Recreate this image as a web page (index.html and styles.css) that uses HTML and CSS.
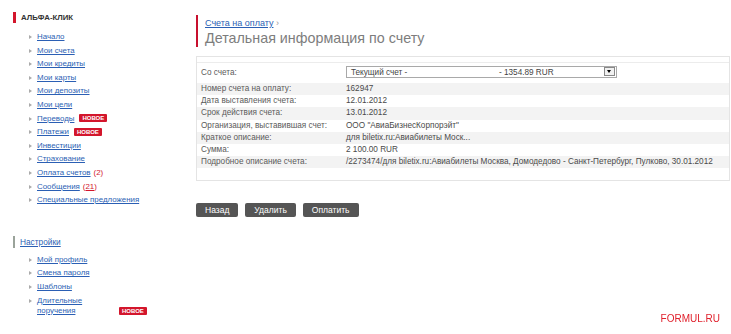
FILE: index.html
```html
<!DOCTYPE html>
<html lang="ru">
<head>
    <meta charset="UTF-8">
    <title>Альфа-Клик — Детальная информация по счету</title>
    <link rel="stylesheet" href="styles.css">
</head>
<body>

<div class="page">
    <div class="sidebar">
        <div class="side-title">АЛЬФА-КЛИК</div>
        <ul class="menu">
            <li><a href="#">Начало</a></li>
            <li><a href="#">Мои счета</a></li>
            <li><a href="#">Мои кредиты</a></li>
            <li><a href="#">Мои карты</a></li>
            <li><a href="#">Мои депозиты</a></li>
            <li><a href="#">Мои цели</a></li>
            <li><a href="#">Переводы</a><span class="badge">новое</span></li>
            <li><a href="#">Платежи</a><span class="badge">новое</span></li>
            <li><a href="#">Инвестиции</a></li>
            <li><a href="#">Страхование</a></li>
            <li><a href="#">Оплата счетов</a> <span class="count">(2)</span></li>
            <li><a href="#">Сообщения</a> <span class="count">(<u>21</u>)</span></li>
            <li><a href="#">Специальные предложения</a></li>
        </ul>

        <div class="side-sub"><a href="#">Настройки</a></div>
        <ul class="menu">
            <li><a href="#">Мой профиль</a></li>
            <li><a href="#">Смена пароля</a></li>
            <li><a href="#">Шаблоны</a></li>
            <li class="wide"><a href="#" class="narrow">Длительные поручения</a><span class="badge">новое</span></li>
        </ul>
    </div>

    <div class="content">
        <div class="head">
            <div class="crumbs"><a href="#">Счета на оплату</a> <span class="arr">›</span></div>
            <h1>Детальная информация по счету</h1>
        </div>

        <div class="panel">
            <div class="panel-top"></div>
            <div class="row-select">
                <div class="label">Со счета:</div>
                <div class="select">
                    <span class="sel-name">Текущий счет -</span>
                    <span class="sel-sum">- 1354.89 RUR</span>
                    <span class="sel-btn"></span>
                </div>
            </div>
            <div class="rows">
                <div class="row"><div class="label">Номер счета на оплату:</div><div class="value">162947</div></div>
                <div class="row"><div class="label">Дата выставления счета:</div><div class="value">12.01.2012</div></div>
                <div class="row"><div class="label">Срок действия счета:</div><div class="value">13.01.2012</div></div>
                <div class="row"><div class="label">Организация, выставившая счет:</div><div class="value">ООО "АвиаБизнесКорпорэйт"</div></div>
                <div class="row"><div class="label">Краткое описание:</div><div class="value">для biletix.ru:Авиабилеты Моск...</div></div>
                <div class="row"><div class="label">Сумма:</div><div class="value">2 100.00 RUR</div></div>
                <div class="row"><div class="label">Подробное описание счета:</div><div class="value">/2273474/для biletix.ru:Авиабилеты Москва, Домодедово - Санкт-Петербург, Пулково, 30.01.2012</div></div>
            </div>
        </div>

        <div class="buttons">
            <button>Назад</button>
            <button>Удалить</button>
            <button>Оплатить</button>
        </div>
    </div>
</div>

<div class="watermark">FORMUL.RU</div>

</body>
</html>
```

FILE: styles.css
```css
body {
    margin: 0;
    font-family: 'Liberation Sans', Arial, sans-serif;
    font-size: 8.2px;
    color: #5a5a5a;
    background: #fff;
}
a {
    color: #2b5fb4;
}
.page {
    display: flex;
}
.sidebar {
    width: 190px;
    flex-shrink: 0;
    padding: 12px 0 0 13px;
    box-sizing: border-box;
}
.side-title {
    border-left: 3px solid #d3162c;
    padding-left: 5px;
    font-weight: bold;
    font-size: 7.8px;
    line-height: 11px;
    color: #333;
}
.menu {
    list-style: none;
    margin: 7px 0 0 0;
    padding: 0 0 0 16px;
    font-size: 7.9px;
}
.menu li {
    line-height: 13.6px;
    padding-left: 8px;
    position: relative;
    display: flex;
    align-items: center;
}
.menu li:before {
    content: "";
    position: absolute;
    left: 0;
    top: 5px;
    border-left: 3px solid #aaa;
    border-top: 2px solid transparent;
    border-bottom: 2px solid transparent;
}
.badge {
    background: #d3162c;
    color: #fff;
    font-weight: bold;
    font-size: 6px;
    text-transform: uppercase;
    line-height: 8px;
    padding: 0 3px;
    border-radius: 1px;
    margin-left: 5px;
}
.count {
    color: #d3162c;
    margin-left: 3px;
}
.count u {
    color: #d3162c;
}
.side-sub {
    margin-top: 29px;
    border-left: 2px solid #9aa39a;
    padding-left: 5px;
    line-height: 12px;
    font-size: 8.3px;
}
.side-sub + .menu {
    margin-top: 5px;
}
.menu li.wide {
    align-items: flex-end;
    line-height: 10px;
    padding-top: 2px;
}
.narrow {
    width: 82px;
}
.menu li.wide .badge {
    margin-left: 0;
    margin-bottom: 1px;
}
.content {
    flex: 1;
    min-width: 0;
    padding: 15px 1px 0 6px;
}
.head {
    border-left: 2px solid #c8102e;
    padding-left: 7px;
    height: 32px;
}
.crumbs {
    font-size: 9px;
    padding-top: 3px;
    line-height: 11px;
}
.arr {
    color: #999;
}
h1 {
    margin: 0;
    font-weight: normal;
    font-size: 14.3px;
    line-height: 18px;
    color: #7d7d7d;
}
.panel {
    margin-top: 9px;
    border: 1px solid #e4e4e4;
    padding-bottom: 12px;
}
.panel-top {
    height: 5px;
    border-bottom: 1px solid #ececec;
}
.row-select {
    display: flex;
    align-items: center;
    height: 18px;
    padding-left: 4px;
    margin-bottom: 2px;
}
.label {
    width: 145px;
    flex-shrink: 0;
    white-space: nowrap;
}
.select {
    width: 271px;
    height: 12px;
    box-sizing: border-box;
    border: 1px solid #a9a9a9;
    display: flex;
    align-items: center;
    padding-left: 4px;
    color: #444;
    position: relative;
}
.sel-name {
    width: 148px;
}
.sel-btn {
    position: absolute;
    right: 1px;
    top: 0;
    width: 11px;
    height: 9px;
    border: 1px solid #888;
    box-sizing: border-box;
    background: #f0f0f0;
}
.sel-btn:after {
    content: "";
    position: absolute;
    left: 2px;
    top: 2px;
    border-top: 3px solid #000;
    border-left: 2.5px solid transparent;
    border-right: 2.5px solid transparent;
}
.row {
    display: flex;
    height: 12.2px;
    line-height: 12.2px;
    padding-left: 4px;
}
.row:nth-child(odd) {
    background: #f3f3f3;
}
.value {
    color: #4a4a4a;
    white-space: nowrap;
}
.buttons {
    margin-top: 22px;
    display: flex;
    gap: 7px;
}
button {
    background: #555;
    color: #fff;
    border: none;
    border-radius: 2px;
    font-family: 'Liberation Sans', Arial, sans-serif;
    font-size: 8.5px;
    height: 14px;
    padding: 0 9px;
    cursor: pointer;
}
.watermark {
    position: fixed;
    right: 11px;
    bottom: 10px;
    font-family: 'Liberation Sans', Arial, sans-serif;
    font-size: 10px;
    color: #e0202c;
}
```
